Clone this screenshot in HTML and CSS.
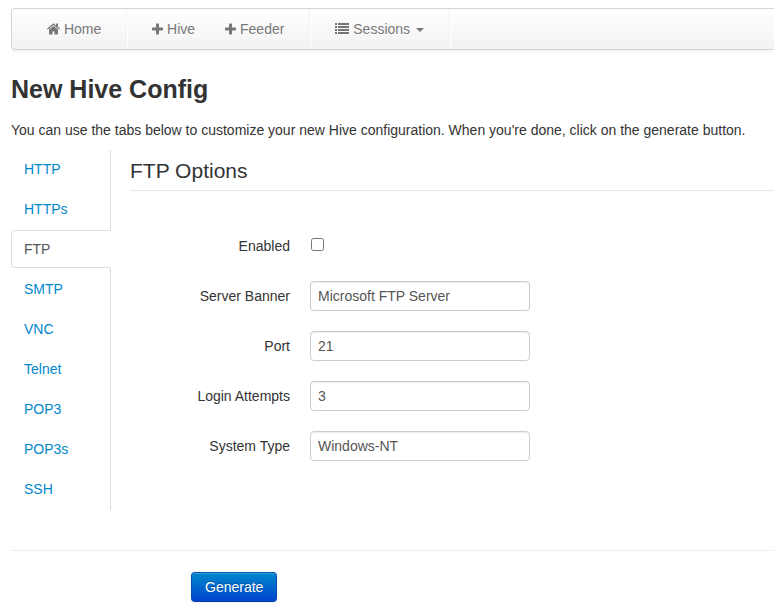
FILE: index.html
```html
<!DOCTYPE html>
<html lang="en">
<head>
<meta charset="utf-8">
<title>New Hive Config</title>
<link rel="stylesheet" href="styles.css">
</head>
<body>
<nav class="navbar">
  <ul class="nav">
    <li><a class="nav-link" href="#"><svg class="icon" width="13" height="14" viewBox="0 0 13 14" aria-hidden="true"><path d="M11 7.600v4q0 .9-.9.900H7.500V9.500h-2v3H2.900q-.9 0-.9-.9v-4L6.500 3.900z"/><path d="M12.800 6.900l-.5.600c-.1.100-.2.100-.3 0L6.500 2.900 1 7.500c-.1.100-.3.100-.4 0L.2 6.900c-.1-.1-.1-.3 0-.4L5.900 1.800c.3-.3.800-.3 1.200 0L9 3.400V1.900c0-.2.100-.3.300-.3h1.500c.2 0 .2.100.2.300V5l1.800 1.500c.1.100.1.300 0 .4z"/></svg> Home</a></li>
    <li class="divider"></li>
    <li><a class="nav-link" href="#"><svg class="icon" width="11" height="14" viewBox="0 0 11 14" aria-hidden="true"><path d="M4.700 1.500h1.600q.7 0 .7.700V5.500h3.300q.7 0 .7.700v1.600q0 .7-.7.700H7v3.300q0 .7-.7.700H4.700q-.7 0-.7-.7V8.500H.7Q0 8.500 0 7.800V6.200q0-.7.700-.7H4V2.200q0-.7.700-.7z"/></svg> Hive</a></li>
    <li><a class="nav-link" href="#"><svg class="icon" width="11" height="14" viewBox="0 0 11 14" aria-hidden="true"><path d="M4.700 1.500h1.600q.7 0 .7.700V5.500h3.300q.7 0 .7.700v1.600q0 .7-.7.700H7v3.300q0 .7-.7.700H4.700q-.7 0-.7-.7V8.500H.7Q0 8.500 0 7.800V6.200q0-.7.700-.7H4V2.200q0-.7.700-.7z"/></svg> Feeder</a></li>
    <li class="divider"></li>
    <li><a class="nav-link" href="#"><svg class="icon" width="14" height="14" viewBox="0 0 14 14" aria-hidden="true"><path d="M0 1h2v2H0zM3 1h11v2H3zM0 4h2v2H0zM3 4h11v2H3zM0 7h2v2H0zM3 7h11v2H3zM0 10h2v2H0zM3 10h11v2H3z"/></svg> Sessions <span class="caret"></span></a></li>
    <li class="divider"></li>
  </ul>
</nav>

<main>
  <h1>New Hive Config</h1>
  <p class="intro">You can use the tabs below to customize your new Hive configuration. When you're done, click on the generate button.</p>

  <form>
    <div class="tabbable">
      <ul class="tabs">
        <li><a class="tab" href="#">HTTP</a></li>
        <li><a class="tab" href="#">HTTPs</a></li>
        <li><a class="tab active" href="#">FTP</a></li>
        <li><a class="tab" href="#">SMTP</a></li>
        <li><a class="tab" href="#">VNC</a></li>
        <li><a class="tab" href="#">Telnet</a></li>
        <li><a class="tab" href="#">POP3</a></li>
        <li><a class="tab" href="#">POP3s</a></li>
        <li><a class="tab" href="#">SSH</a></li>
      </ul>
      <section class="pane">
        <h2>FTP Options</h2>
        <div class="group"><label for="enabled">Enabled</label><input class="check" type="checkbox" id="enabled"></div>
        <div class="group"><label for="banner">Server Banner</label><input class="field" type="text" id="banner" value="Microsoft FTP Server"></div>
        <div class="group"><label for="port">Port</label><input class="field" type="text" id="port" value="21"></div>
        <div class="group"><label for="attempts">Login Attempts</label><input class="field" type="text" id="attempts" value="3"></div>
        <div class="group"><label for="system">System Type</label><input class="field" type="text" id="system" value="Windows-NT"></div>
      </section>
    </div>
    <div class="actions"><button class="btn" type="button">Generate</button></div>
  </form>
</main>
</body>
</html>
```
FILE: styles.css
```css
* { box-sizing: border-box; }

body {
  margin: 8px 0 0 11px;
  background: #fff;
  color: #333;
  font: 14px/20px "Liberation Sans", Arial, sans-serif;
}

a { color: #08c; text-decoration: none; }
ul { margin: 0; padding: 0; list-style: none; }

.navbar {
  padding: 0 20px;
  border: 1px solid #d4d4d4;
  border-right: 0;
  border-radius: 4px 0 0 4px;
  background: linear-gradient(#fff, #f2f2f2);
  box-shadow: 0 1px 4px rgba(0, 0, 0, 0.067);
}

.nav { display: flex; }
.nav-link {
  display: block;
  padding: 10px 15px;
  color: #777;
  text-shadow: 0 1px 0 #fff;
  white-space: nowrap;
}
.divider {
  margin: 0 9px 0 10px;
  border-left: 1px solid #f2f2f2;
  border-right: 1px solid #fff;
}
.icon { fill: currentColor; vertical-align: -2px; }
.caret {
  display: inline-block;
  margin-left: 2px;
  border: 4px solid transparent;
  border-top-color: #777;
  border-bottom: 0;
  vertical-align: middle;
}

h1 {
  margin: 20px 0 12px;
  font-size: 25px;
  line-height: 38px;
}
.intro { margin: 0 0 10px; }

.tabbable { display: flex; gap: 19px; }
.tabs {
  flex: none;
  width: 100px;
  border-right: 1px solid #ddd;
}
.tab {
  display: block;
  margin: 0 -1px 2px 0;
  padding: 8px 12px;
  border: 1px solid transparent;
  border-radius: 4px 0 0 4px;
}
.tab.active {
  border-color: #ddd transparent #ddd #ddd;
  background: #fff;
  color: #555;
}

.pane { flex: 1; }
h2 {
  margin: 0 0 40px;
  padding-top: 2px;
  border-bottom: 1px solid #e5e5e5;
  font-size: 21px;
  font-weight: normal;
  line-height: 38px;
}
.group {
  display: flex;
  align-items: flex-start;
  gap: 20px;
  height: 30px;
  margin-bottom: 20px;
}
.group label { width: 160px; padding-top: 5px; text-align: right; }
.check { width: 13px; height: 13px; margin: 7px 0 0 1px; }
.field {
  width: 220px;
  height: 30px;
  padding: 4px 7px;
  border: 1px solid #ccc;
  border-radius: 4px;
  background: #fff;
  box-shadow: inset 0 1px 1px rgba(0, 0, 0, 0.075);
  color: #555;
  font: inherit;
}

.actions {
  margin-top: 40px;
  padding: 21px 0 12px 180px;
  border-top: 1px solid #eee;
}
.btn {
  padding: 4px 13px;
  border: 1px solid;
  border-color: #0055b3 #0050b3 #003fb3;
  border-radius: 4px;
  background: linear-gradient(#08c, #04c);
  box-shadow: inset 0 1px 0 rgba(255, 255, 255, 0.2), 0 1px 2px rgba(0, 0, 0, 0.05);
  color: #fff;
  font: inherit;
  text-shadow: 0 -1px 0 rgba(0, 0, 0, 0.25);
}
```
